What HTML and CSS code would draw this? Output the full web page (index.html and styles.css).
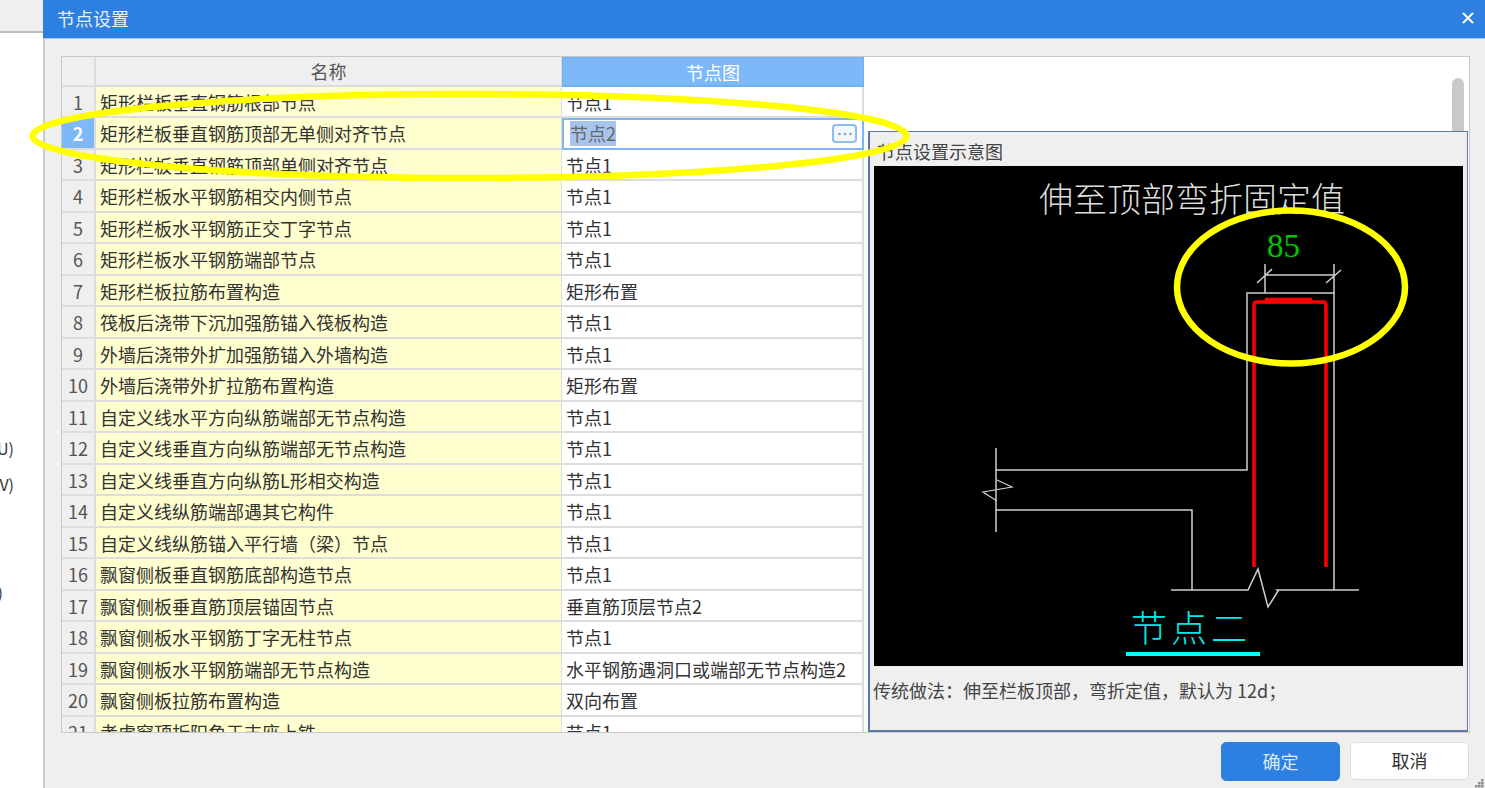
FILE: index.html
```html
<!DOCTYPE html>
<html lang="zh-CN">
<head>
<meta charset="utf-8">
<title>节点设置</title>
<link rel="stylesheet" href="styles.css">
</head>
<body>
<div class="app">
  <aside class="sidebar">
    <div class="side-top"></div>
    <ul class="side-list">
      <li class="side-item">(U)</li>
      <li class="side-item">(V)</li>
      <li class="side-item"></li>
      <li class="side-item"></li>
      <li class="side-item side-item-short">(X)</li>
    </ul>
  </aside>
  <section class="dialog">
    <header class="titlebar">
      <span class="title">节点设置</span>
      <svg class="close" width="14" height="14" viewBox="0 0 14 14"><path d="M2 2 L12 12 M12 2 L2 12"/></svg>
    </header>
    <div class="dialog-body">
      <div class="content">
        <div class="table">
          <div class="row head"><div class="idx"></div><div class="name">名称</div><div class="val">节点图</div></div>
          <div class="row"><div class="idx">1</div><div class="name">矩形栏板垂直钢筋根部节点</div><div class="val">节点1</div></div>
          <div class="row current"><div class="idx">2</div><div class="name">矩形栏板垂直钢筋顶部无单侧对齐节点</div><div class="val"><span class="sel">节点2</span><span class="more"><svg width="16" height="4" viewBox="0 0 16 4"><circle cx="2.5" cy="2" r="1.3"/><circle cx="8" cy="2" r="1.3"/><circle cx="13.5" cy="2" r="1.3"/></svg></span></div></div>
          <div class="row"><div class="idx">3</div><div class="name">矩形栏板垂直钢筋顶部单侧对齐节点</div><div class="val">节点1</div></div>
          <div class="row"><div class="idx">4</div><div class="name">矩形栏板水平钢筋相交内侧节点</div><div class="val">节点1</div></div>
          <div class="row"><div class="idx">5</div><div class="name">矩形栏板水平钢筋正交丁字节点</div><div class="val">节点1</div></div>
          <div class="row"><div class="idx">6</div><div class="name">矩形栏板水平钢筋端部节点</div><div class="val">节点1</div></div>
          <div class="row"><div class="idx">7</div><div class="name">矩形栏板拉筋布置构造</div><div class="val">矩形布置</div></div>
          <div class="row"><div class="idx">8</div><div class="name">筏板后浇带下沉加强筋锚入筏板构造</div><div class="val">节点1</div></div>
          <div class="row"><div class="idx">9</div><div class="name">外墙后浇带外扩加强筋锚入外墙构造</div><div class="val">节点1</div></div>
          <div class="row"><div class="idx">10</div><div class="name">外墙后浇带外扩拉筋布置构造</div><div class="val">矩形布置</div></div>
          <div class="row"><div class="idx">11</div><div class="name">自定义线水平方向纵筋端部无节点构造</div><div class="val">节点1</div></div>
          <div class="row"><div class="idx">12</div><div class="name">自定义线垂直方向纵筋端部无节点构造</div><div class="val">节点1</div></div>
          <div class="row"><div class="idx">13</div><div class="name">自定义线垂直方向纵筋L形相交构造</div><div class="val">节点1</div></div>
          <div class="row"><div class="idx">14</div><div class="name">自定义线纵筋端部遇其它构件</div><div class="val">节点1</div></div>
          <div class="row"><div class="idx">15</div><div class="name">自定义线纵筋锚入平行墙（梁）节点</div><div class="val">节点1</div></div>
          <div class="row"><div class="idx">16</div><div class="name">飘窗侧板垂直钢筋底部构造节点</div><div class="val">节点1</div></div>
          <div class="row"><div class="idx">17</div><div class="name">飘窗侧板垂直筋顶层锚固节点</div><div class="val">垂直筋顶层节点2</div></div>
          <div class="row"><div class="idx">18</div><div class="name">飘窗侧板水平钢筋丁字无柱节点</div><div class="val">节点1</div></div>
          <div class="row"><div class="idx">19</div><div class="name">飘窗侧板水平钢筋端部无节点构造</div><div class="val">水平钢筋遇洞口或端部无节点构造2</div></div>
          <div class="row"><div class="idx">20</div><div class="name">飘窗侧板拉筋布置构造</div><div class="val">双向布置</div></div>
          <div class="row"><div class="idx">21</div><div class="name">考虑窗顶折阳角于支座上铁</div><div class="val">节点1</div></div>
        </div>
        <div class="side-pane">
          <div class="scroll-area"><div class="scroll-thumb"></div></div>
          <div class="preview">
            <div class="preview-title">节点设置示意图</div>
            <svg class="drawing" width="589" height="500" viewBox="874 166 589 500">
              <text class="cad-title" x="1039" y="212">伸至顶部弯折固定值</text>
              <text class="cad-dim" x="1267" y="257">85</text>
              <g class="cad-line">
                <path d="M1265 264V293M1334 264V293M1265 275H1334M1257 283L1272 269M1326 283L1341 270"/>
                <path d="M1192 590V510H996M996 448V532M996 470H1247V293H1334V590"/>
                <path d="M1171 590H1248L1258 569L1268 607L1278 591L1277 590H1359"/>
                <path class="cad-thin" d="M997 480L1012 487L983 492L997 501"/>
              </g>
              <g class="cad-red">
                <path d="M1254 567V305Q1254 302 1257 302H1323Q1326 302 1326 305V567"/>
                <path class="cad-red-thick" d="M1265 300.500H1312"/>
              </g>
              <text class="cad-node" x="1131" y="642">节点二</text>
              <rect class="cad-under" x="1126" y="652" width="134" height="4"/>
            </svg>
            <p class="preview-desc">传统做法：伸至栏板顶部，弯折定值，默认为 12d；</p>
          </div>
        </div>
      </div>
      <footer class="actions">
        <button class="btn btn-primary">确定</button>
        <button class="btn">取消</button>
      </footer>
      <svg class="grip" width="9" height="9" viewBox="0 0 9 9"><rect x="6" y="0" width="2.500" height="2.500"/><rect x="3" y="3" width="2.500" height="2.500"/><rect x="6" y="3" width="2.500" height="2.500"/><rect x="0" y="6" width="2.500" height="2.500"/><rect x="3" y="6" width="2.500" height="2.500"/><rect x="6" y="6" width="2.500" height="2.500"/></svg>
    </div>
  </section>
  <svg class="marks" width="1485" height="788" viewBox="0 0 1485 788">
    <ellipse cx="469.500" cy="136" rx="437" ry="42"/>
    <ellipse cx="1291" cy="287" rx="114" ry="76.500"/>
  </svg>
</div>
</body>
</html>
```
FILE: styles.css
```css
* { box-sizing: border-box; }
html, body { margin: 0; padding: 0; height: 100%; overflow: hidden; background: #fff; }
body { font-family: "Noto Sans CJK SC", "Noto Sans", sans-serif; font-size: 18px; color: #333; }

.app { position: relative; display: flex; width: 1485px; height: 788px; overflow: hidden; }

.sidebar { width: 43px; flex: none; background: #fff; }
.side-top { height: 33px; background: #efefef; border-bottom: 2px solid #bdbdbd; }
.side-list { list-style: none; margin: 0; padding: 397px 0 0; }
.side-item { width: 14px; height: 36px; display: flex; align-items: center; justify-content: flex-end; overflow: hidden; white-space: nowrap; font-size: 16px; line-height: 36px; }
.side-item-short { width: 3px; }

.dialog { flex: 1; min-width: 0; display: flex; flex-direction: column; position: relative; background: #efefef; }
.titlebar { height: 38px; flex: none; display: flex; align-items: center; justify-content: space-between; padding: 0 9px 2px 14px; background: #2d7fe0; color: #e6f0fc; line-height: 36px; }
.title { font-size: 18px; }
.close { display: block; margin-right: 1px; }
.close path { stroke: #fff; stroke-width: 2; fill: none; }

.dialog-body { flex: 1; display: flex; flex-direction: column; padding: 17px 15px 0 16px; border-left: 2px solid #c6cbdc; border-top: 1px solid #a9c6ee; }
.content { height: 677px; flex: none; display: flex; background: #fff; border: 1px solid #c9c9c9; }

.table { width: 802px; flex: none; height: 675px; overflow: hidden; }
.row { display: grid; grid-template-columns: 34px 466px 302px; height: 31.5px; line-height: 30px; }
.idx, .name, .val { border-bottom: 2px solid #ddd; white-space: nowrap; overflow: hidden; }
.idx { background: #efefef; border-right: 2px solid #ddd; text-align: center; color: #555; }
.name { background: #fefece; padding-left: 4px; border-right: 1px solid #ddd; }
.val { background: #fff; padding-left: 4px; border-right: 2px solid #ddd; }

.head { height: 29.5px; line-height: 28px; }
.head .idx { background: #efefef; }
.head .name { background: #efefef; text-align: center; padding-left: 0; color: #555; }
.head .val { background: #7db8f9; color: #fff; text-align: center; padding-left: 0; border: 1px solid #6fb0f4; border-bottom-width: 2px; }

.current .idx { background: #7db8f9; color: #fff; font-weight: 700; }
.current .val { display: flex; align-items: center; justify-content: space-between; padding: 0 5px 0 6px; border: 2px solid #7db8f5; }
.sel { background: #a6c4ec; color: #666; line-height: 25px; height: 25px; }
.more { width: 25px; height: 19px; display: flex; align-items: center; justify-content: center; border: 2px solid #8dbdf1; border-radius: 4px; background: #f4f8fd; }
.more circle { fill: #7aa6dd; }
.more svg { display: block; }

.side-pane { flex: 1; min-width: 0; display: flex; flex-direction: column; padding-left: 4px; }
.scroll-area { height: 74px; flex: none; padding: 21px 5px 0 0; display: flex; justify-content: flex-end; }
.scroll-thumb { width: 12px; height: 53px; background: #c9c9c9; border-radius: 6px 6px 0 0; }

.preview { flex: 1; min-height: 0; margin-right: 1px; background: #efefef; border: 2px solid #5b78a5; border-top-width: 1px; border-right-width: 1px; padding: 0 4px; }
.preview-title { height: 34px; padding: 7px 3px 0; line-height: 24px; color: #444; }
.drawing { display: block; background: #000; }
.preview-desc { margin: 12px 0 0 -1px; line-height: 24px; white-space: nowrap; color: #444; }

.cad-title { font-size: 34px; font-weight: 300; fill: #dcdcdc; }
.cad-dim { font-family: "Liberation Serif", serif; font-size: 33px; fill: #00c800; }
.cad-line path { fill: none; stroke: #d0d0d0; stroke-width: 1.5; }
.cad-line .cad-thin { stroke-width: 1.2; }
.cad-red path { fill: none; stroke: #f00; stroke-width: 3.500; }
.cad-red .cad-red-thick { stroke-width: 5.500; }
.cad-node { font-size: 36px; font-weight: 300; letter-spacing: 4px; fill: #00e8e8; }
.cad-under { fill: #0ff; }

.actions { flex: 1; display: flex; justify-content: flex-end; align-items: flex-start; gap: 10px; padding: 9px 1px 0 0; }
.btn { width: 119px; height: 38px; font: inherit; color: #333; background: #fff; border: 1px solid #ddd; border-radius: 5px; padding: 0 0 2px; line-height: 34px; }
.btn-primary { background: #2d7fe0; border-color: #2d7fe0; color: #dbe9fb; height: 39px; }

.grip { position: absolute; right: 1px; bottom: 0; }
.grip rect { fill: #8a8f96; }

.marks { position: absolute; left: 0; top: 0; pointer-events: none; }
.marks ellipse { fill: none; stroke: #ff0; stroke-width: 6.500; }
```
